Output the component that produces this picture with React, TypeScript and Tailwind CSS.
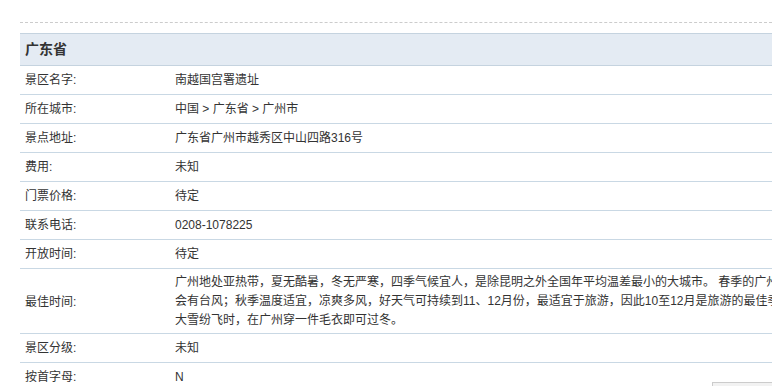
const rows: { label: string; value: string }[] = [
  { label: "景区名字:", value: "南越国宫署遗址" },
  { label: "所在城市:", value: "中国 > 广东省 > 广州市" },
  { label: "景点地址:", value: "广东省广州市越秀区中山四路316号" },
  { label: "费用:", value: "未知" },
  { label: "门票价格:", value: "待定" },
  { label: "联系电话:", value: "0208-1078225" },
  { label: "开放时间:", value: "待定" },
];

const tail: { label: string; value: string }[] = [
  { label: "景区分级:", value: "未知" },
  { label: "按首字母:", value: "N" },
];

const bestTime = [
  "广州地处亚热带，夏无酷暑，冬无严寒，四季气候宜人，是除昆明之外全国年平均温差最小的大城市。 春季的广州多雨潮湿；夏季天气炎热，时",
  "会有台风；秋季温度适宜，凉爽多风，好天气可持续到11、12月份，最适宜于旅游，因此10至12月是旅游的最佳季节；冬季北方",
  "大雪纷飞时，在广州穿一件毛衣即可过冬。",
];

function Row({ label, value }: { label: string; value: string }) {
  return (
    <div className="flex h-[29px] items-center border-b border-[#c9d8e4]">
      <div className="w-[150px] shrink-0 pl-[5px]">{label}</div>
      <div className="pl-[5px] whitespace-nowrap">{value}</div>
    </div>
  );
}

export default function App() {
  return (
    <div
      className="relative h-[386px] w-[772px] overflow-hidden bg-white text-[12px] text-[#333]"
      style={{ fontFamily: '"Liberation Sans", "Noto Sans CJK SC", sans-serif' }}
    >
      <div className="pl-[20px] pt-[22px]">
        <div className="border-t border-dashed border-[#cccccc]" />

        <div className="mt-[10px] w-[900px]">
          <div className="flex h-[33px] items-center border-y border-[#c5d3df] bg-[#e4ebf3] pl-[5px] text-[14px] font-bold">
            广东省
          </div>

          {rows.map((r) => (
            <Row key={r.label} {...r} />
          ))}

          <div className="flex items-center border-b border-[#c9d8e4] pt-[4px] pb-[3px]">
            <div className="w-[150px] shrink-0 pl-[5px]">最佳时间:</div>
            <div className="pl-[5px] leading-[19px]">
              {bestTime.map((line) => (
                <div key={line} className="whitespace-nowrap">
                  {line}
                </div>
              ))}
            </div>
          </div>

          {tail.map((r) => (
            <Row key={r.label} {...r} />
          ))}
        </div>
      </div>

      {/* floating back-to-top tab, peeking in at the bottom edge */}
      <div className="absolute left-[712px] top-[382px] h-[30px] w-[80px] border border-[#cccccc] bg-[#f2f2f2]" />
    </div>
  );
}
